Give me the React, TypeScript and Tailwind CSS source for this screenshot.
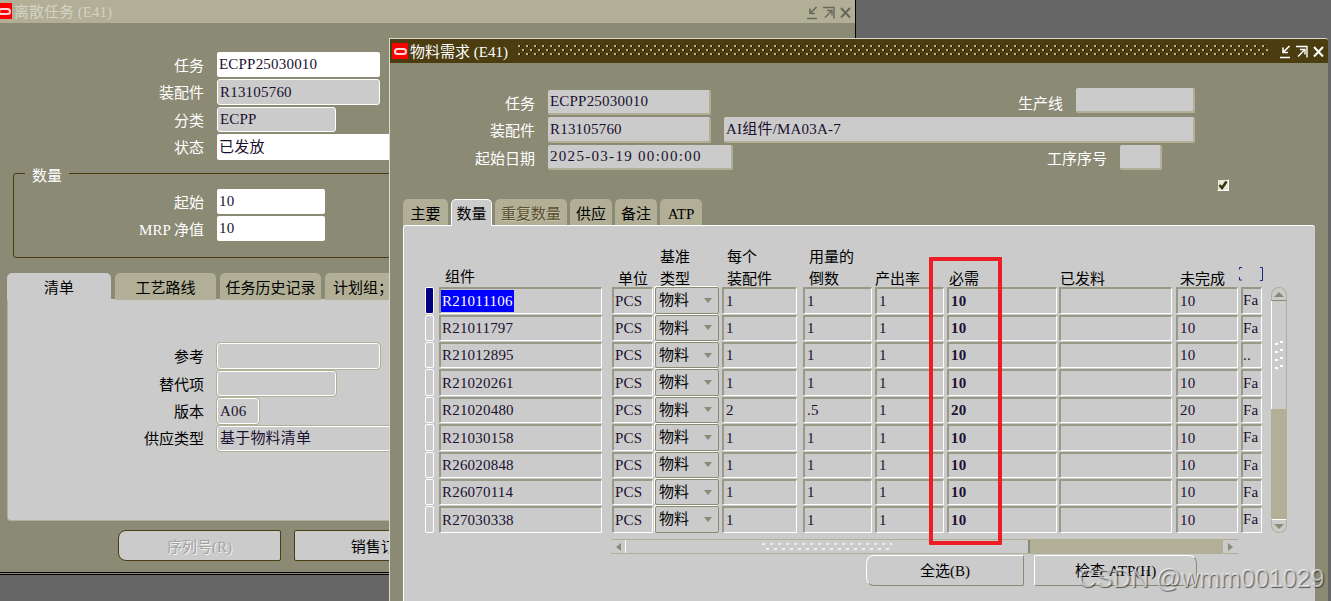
import type { ReactNode } from "react";

const tones = {
  input: "bg-white rounded-[2px]",
  readonly: "bg-[#cbcbcb] rounded-[3px] border border-white",
  panel: "bg-[#cbcbcb] rounded-[3px] border border-white outline outline-[#b1af95]",
  flat: "bg-[#cbcbcb] rounded-[2px] border-r-2 border-b-2 border-[#b1af95]",
};

const Field = ({
  w,
  tone,
  text,
  wide,
}: {
  w: string;
  tone: keyof typeof tones;
  text?: string;
  wide?: boolean;
}) => (
  <div
    className={`${w} ${tones[tone]} ${wide ? "tracking-[1.3px]" : "tracking-[0.2px]"} h-[25.4px] shrink-0 pl-[2px] flex items-center text-[#1a1030] whitespace-pre overflow-hidden`}
  >
    {text}
  </div>
);

const Label = ({ w, text, dark }: { w: string; text: string; dark?: boolean }) => (
  <div
    className={`${w} shrink-0 mr-[13px] pt-[3px] text-right whitespace-pre ${dark ? "text-black" : "text-white"}`}
  >
    {text}
  </div>
);

const Row = ({ children }: { children: ReactNode }) => (
  <div className="flex items-center h-[25.4px]">{children}</div>
);

const Logo = ({ className }: { className?: string }) => (
  <div className={`w-[16px] h-[16px] bg-[#ff0000] shrink-0 flex items-center justify-center ${className ?? ""}`}>
    <div className="w-[13px] h-[7px] rounded-full border-2 border-[#ffd9d9]" />
  </div>
);

const WindowButtons = ({ color }: { color: string }) => (
  <svg width="46" height="16" viewBox="0 0 46 16" fill="none" stroke={color} strokeWidth="1.6">
    <path d="M1 13.500h10M10.500 2 4.500 8M4 3.500V8.500H9" />
    <path d="M17 2.500h11v11M19 12.500l6-6M21 5.500h5v5" strokeWidth="1.4" />
    <path d="M35 3l9 9.500M44 3l-9 9.500" strokeWidth="2" />
  </svg>
);

const Tab = ({
  w,
  text,
  active,
  bevel,
  disabled,
}: {
  w: string;
  text: string;
  active?: boolean;
  bevel?: boolean;
  disabled?: boolean;
}) => (
  <div
    className={`${w} shrink-0 h-[27px] pt-[3px] rounded-t-[5px] flex items-center justify-center ${
      active ? "bg-[#cbcbcb] relative z-10" : "bg-[#b1af95] h-[26px]"
    } ${bevel ? "border-t border-l border-r border-white" : ""} ${
      disabled ? "text-[#5b5130] [text-shadow:1px_1px_0_#c8c6ae]" : "text-black"
    }`}
  >
    {text}
  </div>
);

const LeftWindow = () => (
  <section className="absolute left-0 top-0 w-[856px] h-[575px] bg-[#8b8a75] border-b-[3px] border-double border-black border-r border-r-black">
    <header className="h-[23px] bg-[#b1af95] flex items-center text-[#d4d3c4]">
      <Logo className="ml-[-4px] mb-[1px]" />
      <div className="whitespace-pre ml-[2px] pt-[2px]">离散任务 (E41)</div>
      <div className="ml-auto mr-[3px] mt-[3px]">
        <WindowButtons color="#67675c" />
      </div>
    </header>

    <div className="pt-[29px] flex flex-col gap-[2px]">
      <Row>
        <Label w="w-[204px]" text="任务" />
        <Field w="w-[163px]" tone="input" text="ECPP25030010" />
      </Row>
      <Row>
        <Label w="w-[204px]" text="装配件" />
        <Field w="w-[163px]" tone="readonly" text="R13105760" />
      </Row>
      <Row>
        <Label w="w-[204px]" text="分类" />
        <Field w="w-[119px]" tone="readonly" text="ECPP" />
      </Row>
      <Row>
        <Label w="w-[204px]" text="状态" />
        <Field w="w-[300px]" tone="input" text="已发放" />
      </Row>
    </div>

    <fieldset className="ml-[13px] mt-[4px] w-[810px] border border-[#4b3d10] rounded-[3px] pt-[5px] pb-[16px]">
      <legend className="ml-[11px] px-[7px] h-[20px] leading-[24px] text-white">数量</legend>
      <div className="flex flex-col gap-[2px]">
        <Row>
          <Label w="w-[190px]" text="起始" />
          <Field w="w-[108px]" tone="input" text="10" />
        </Row>
        <Row>
          <Label w="w-[190px]" text="MRP 净值" />
          <Field w="w-[108px]" tone="input" text="10" />
        </Row>
      </div>
    </fieldset>

    <div className="ml-[7px] mt-[15px] flex gap-[4px]">
      <Tab w="w-[104px]" text="清单" active />
      <Tab w="w-[101px]" text="工艺路线" />
      <Tab w="w-[101px]" text="任务历史记录" />
      <Tab w="w-[76px]" text="计划组；" />
    </div>
    <div className="ml-[7px] mt-[-1px] w-[820px] h-[222px] bg-[#cbcbcb] rounded-b-[4px] pt-[44px] flex flex-col gap-[2px] border-b border-l border-[#b1af95]">
      <Row>
        <Label w="w-[196px]" text="参考" dark />
        <Field w="w-[163px]" tone="panel" />
      </Row>
      <Row>
        <Label w="w-[196px]" text="替代项" dark />
        <Field w="w-[119px]" tone="panel" />
      </Row>
      <Row>
        <Label w="w-[196px]" text="版本" dark />
        <Field w="w-[42px]" tone="panel" text="A06" />
      </Row>
      <Row>
        <Label w="w-[196px]" text="供应类型" dark />
        <Field w="w-[300px]" tone="panel" text="基于物料清单" />
      </Row>
    </div>

    <div className="ml-[118px] mt-[9px] flex gap-[13px]">
      <div className="w-[163px] h-[31px] pt-[2px] bg-[#cbcbcb] border border-[#4b3d10] rounded-l-[8px] rounded-r-[2px] flex items-center justify-center text-[#a3a3a3] [text-shadow:1px_1px_0_#f2f2f2]">
        序列号(R)
      </div>
      <div className="w-[192px] h-[31px] pt-[2px] bg-[#cbcbcb] border border-[#4b3d10] rounded-[2px] flex items-center justify-center text-black">
        销售订单(S)
      </div>
    </div>
  </section>
);

const rows = [
  { item: "R21011106", per: "1", inv: "1", req: "10", open: "10", fa: "Fa" },
  { item: "R21011797", per: "1", inv: "1", req: "10", open: "10", fa: "Fa" },
  { item: "R21012895", per: "1", inv: "1", req: "10", open: "10", fa: ".." },
  { item: "R21020261", per: "1", inv: "1", req: "10", open: "10", fa: "Fa" },
  { item: "R21020480", per: "2", inv: ".5", req: "20", open: "20", fa: "Fa" },
  { item: "R21030158", per: "1", inv: "1", req: "10", open: "10", fa: "Fa" },
  { item: "R26020848", per: "1", inv: "1", req: "10", open: "10", fa: "Fa" },
  { item: "R26070114", per: "1", inv: "1", req: "10", open: "10", fa: "Fa" },
  { item: "R27030338", per: "1", inv: "1", req: "10", open: "10", fa: "Fa" },
];

const cols =
  "grid grid-cols-[14px_173px_43px_67px_81px_72px_72px_112px_117px_65px_20px]";
const cell =
  "h-[26.4px] flex items-center text-[#1a1030] tracking-[0.2px] border-t-2 border-l-2 border-r border-b border-t-[#9a9985] border-l-[#9a9985] border-r-white border-b-white rounded-[1px] overflow-hidden";

const Head = ({ className, lines }: { className: string; lines: string[] }) => (
  <div className={`${className} leading-[22px] text-black whitespace-pre self-end`}>
    {lines.map((l) => (
      <div key={l}>{l}</div>
    ))}
  </div>
);

const TableHead = () => (
  <div className={`${cols} h-[44px] -mb-[3px]`}>
    <div />
    <Head className="pl-[6px] pb-[2px]" lines={["组件"]} />
    <Head className="pl-[6px]" lines={["单位"]} />
    <Head className="pl-[5px]" lines={["基准", "类型"]} />
    <Head className="pl-[5px]" lines={["每个", "装配件"]} />
    <Head className="pl-[6px]" lines={["用量的", "倒数"]} />
    <Head className="" lines={["产出率"]} />
    <Head className="pl-[2px]" lines={["必需"]} />
    <Head className="pl-[1px]" lines={["已发料"]} />
    <Head className="pl-[4px]" lines={["未完成"]} />
    <div className="relative">
      <svg className="absolute left-[-3px] top-[21px]" width="26" height="14" fill="none" stroke="#1c2a7a">
        <path d="M4 .5H1.500V2.500M1.500 10v3H4M22 .5h2.500v13H22" />
      </svg>
    </div>
  </div>
);

const TableRow = ({ row, first }: { row: (typeof rows)[number]; first: boolean }) => (
  <div className={`${cols} h-[27.4px]`}>
    <div
      className={`w-[9px] h-[26.4px] rounded-[2px] border border-white ${first ? "bg-[#000080]" : ""}`}
    />
    <div className={`${cell} w-[163px]`}>
      <span className={first ? "bg-[#0000ff] text-white px-[1px] leading-[22px]" : "px-[1px]"}>
        {row.item}
      </span>
    </div>
    <div className={`${cell} w-[41px] pl-[1px]`}>PCS</div>
    <div className="w-[64px] h-[26.4px] pl-[3px] pr-[6px] flex items-center justify-between text-black border-[1.5px] border-[#8b8a75] shadow-[-1px_-1px_0_#fff] rounded-[2px]">
      物料
      <span className="w-0 h-0 border-x-[4px] border-t-[5px] border-x-transparent border-t-[#8b8a75]" />
    </div>
    <div className={`${cell} w-[75px] pl-[2px]`}>{row.per}</div>
    <div className={`${cell} w-[69px] pl-[2px]`}>{row.inv}</div>
    <div className={`${cell} w-[69px] pl-[2px]`}>1</div>
    <div className={`${cell} w-[110px] pl-[2px] font-bold`}>{row.req}</div>
    <div className={`${cell} w-[113px]`} />
    <div className={`${cell} w-[62px] pl-[2px]`}>{row.open}</div>
    <div className={`${cell} w-[21px] leading-none`}>{row.fa}</div>
  </div>
);

const Dots = ({ count }: { count: number }) => (
  <div className="flex flex-col gap-[4px]">
    {Array.from({ length: count }).map((_, i) => (
      <div key={i} className="flex gap-[2px]">
        <span className="w-[3px] h-[2px] bg-white mt-[2px]" />
        <span className="w-[3px] h-[2px] bg-white" />
      </div>
    ))}
  </div>
);

const VScroll = () => (
  <div className="ml-[10px] w-[16px] h-[246px] flex flex-col items-stretch">
    <div className="h-[14px] rounded-t-[8px] border border-[#b1af95] border-b-[#8b8a75] flex items-center justify-center">
      <span className="w-0 h-0 border-x-[5px] border-b-[5px] border-x-transparent border-b-[#8b8a75]" />
    </div>
    <div className="h-[108px] border-x border-[#b1af95] border-l-white flex items-center justify-center">
      <Dots count={4} />
    </div>
    <div className="h-[110px] bg-[#b1af95]" />
    <div className="h-[14px] rounded-b-[8px] bg-[#cbcbcb] border border-[#b1af95] border-t-white flex items-center justify-center">
      <span className="w-0 h-0 border-x-[5px] border-t-[5px] border-x-transparent border-t-[#8b8a75]" />
    </div>
  </div>
);

const HScroll = () => (
  <div className="ml-[186px] mt-[5.4px] w-[627px] h-[15px] flex border-y border-[#b1af95]">
    <div className="w-[15px] flex items-center justify-center rounded-l-[6px] border-r border-white">
      <span className="w-0 h-0 border-y-[4px] border-r-[5px] border-y-transparent border-r-[#8b8a75]" />
    </div>
    <div className="w-[404px] border-r-2 border-[#8b8a75] flex items-center justify-center">
      <svg width="130" height="8">
        <defs>
          <pattern id="hdots" width="8" height="8" patternUnits="userSpaceOnUse">
            <rect x="0" y="0" width="3" height="2" fill="#efefef" />
            <rect x="4" y="5" width="3" height="2" fill="#efefef" />
          </pattern>
        </defs>
        <rect width="130" height="8" fill="url(#hdots)" />
      </svg>
    </div>
    <div className="flex-1 bg-[#b1af95]" />
    <div className="w-[15px] bg-[#cbcbcb] flex items-center justify-center rounded-r-[6px]">
      <span className="w-0 h-0 border-y-[4px] border-l-[5px] border-y-transparent border-l-[#8b8a75]" />
    </div>
  </div>
);

const RightWindow = () => (
  <section className="absolute left-[389px] top-[38px] w-[939px] h-[563px] bg-[#8b8a75] border-t border-l border-[#d9d9d0] rounded-tr-[3px] overflow-hidden">
    <header className="h-[24px] bg-[#4b3d10] flex items-center pl-[2px] text-white">
      <Logo />
      <div className="whitespace-pre ml-[2px] w-[108px] shrink-0 pt-[2px]">物料需求 (E41)</div>
      <svg className="flex-1 h-[12px]">
        <defs>
          <pattern id="tdots" width="8" height="8" patternUnits="userSpaceOnUse">
            <rect x="0" y="0" width="2" height="2" fill="#b9b48c" />
            <rect x="4" y="4" width="2" height="2" fill="#b9b48c" />
            <rect x="2" y="1" width="1" height="1" fill="#000" />
            <rect x="6" y="5" width="1" height="1" fill="#000" />
          </pattern>
        </defs>
        <rect width="100%" height="100%" fill="url(#tdots)" />
      </svg>
      <div className="ml-[11px] mr-[3px] shrink-0 mt-[1px]">
        <WindowButtons color="#ffffff" />
      </div>
    </header>

    <div className="pt-[27px] flex flex-col gap-[2px]">
      <Row>
        <Label w="w-[145px]" text="任务" />
        <Field w="w-[163px]" tone="flat" text="ECPP25030010" />
        <Label w="w-[352px]" text="生产线" />
        <div className="-mt-[4px]">
          <Field w="w-[119px]" tone="flat" />
        </div>
      </Row>
      <Row>
        <Label w="w-[145px]" text="装配件" />
        <Field w="w-[163px]" tone="flat" text="R13105760" />
        <div className="ml-[13px]">
          <Field w="w-[471px]" tone="flat" text="AI组件/MA03A-7" />
        </div>
      </Row>
      <Row>
        <Label w="w-[145px]" text="起始日期" />
        <Field w="w-[185px]" tone="flat" text="2025-03-19 00:00:00" wide />
        <Label w="w-[374px]" text="工序序号" />
        <Field w="w-[42px]" tone="flat" />
      </Row>
    </div>

    <div className="mt-[9px] ml-[827px] w-[12px] h-[12px] bg-[#e6e6dc] border border-t-[#8b8a75] border-l-[#8b8a75] border-r-white border-b-white flex items-center justify-center">
      <svg width="10" height="10" viewBox="0 0 10 10" fill="none" stroke="#3a3008" strokeWidth="2.500">
        <path d="M1.500 5l2.500 3L8.500 1.500" />
      </svg>
    </div>

    <div className="ml-[13px] mt-[8px] flex gap-[3px] items-end">
      <Tab w="w-[45px]" text="主要" />
      <Tab w="w-[41px]" text="数量" active bevel />
      <Tab w="w-[72px]" text="重复数量" disabled />
      <Tab w="w-[42px]" text="供应" />
      <Tab w="w-[42px]" text="备注" />
      <Tab w="w-[42px]" text="ATP" />
    </div>

    <div className="relative ml-[13px] mt-[-1px] w-[912px] h-[380px] bg-[#cbcbcb] border-t border-l border-white rounded-t-[3px] pt-[20px] pl-[21px]">
      <TableHead />
      <div className="flex items-start">
        <div>
          {rows.map((row, i) => (
            <TableRow key={row.item} row={row} first={i === 0} />
          ))}
        </div>
        <VScroll />
      </div>
      <HScroll />
      <div className="ml-[441px] mt-[1px] flex gap-[10px] text-black">
        <div className="w-[158px] h-[31px] pt-[2px] border border-t-white border-l-white border-r-[#8b8a75] border-b-[#8b8a75] rounded-l-[8px] rounded-r-[2px] flex items-center justify-center">
          全选(B)
        </div>
        <div className="w-[163px] h-[31px] pt-[2px] border border-t-white border-l-white border-r-[#8b8a75] border-b-[#8b8a75] rounded-r-[8px] rounded-l-[2px] flex items-center justify-center whitespace-pre">
          检查 ATP(H)
        </div>
      </div>
      {/* red marker drawn over the table */}
      <div className="absolute left-[525px] top-[31px] w-[73px] h-[288px] border-[4px] border-[#ee1c25] rounded-[1px]" />
    </div>
  </section>
);

export default function App() {
  return (
    <div className="relative w-[1331px] h-[601px] bg-[#666666] overflow-hidden font-['Liberation_Serif','Noto_Sans_CJK_SC',serif] text-[15px]">
      <LeftWindow />
      <RightWindow />
      <div className="absolute left-[1078px] top-[563px] font-['Liberation_Sans',sans-serif] text-[25px] leading-[30px] text-white/60 whitespace-pre [text-shadow:1px_1px_1px_rgba(0,0,0,0.55)]">
        CSDN @wmm001029
      </div>
    </div>
  );
}
